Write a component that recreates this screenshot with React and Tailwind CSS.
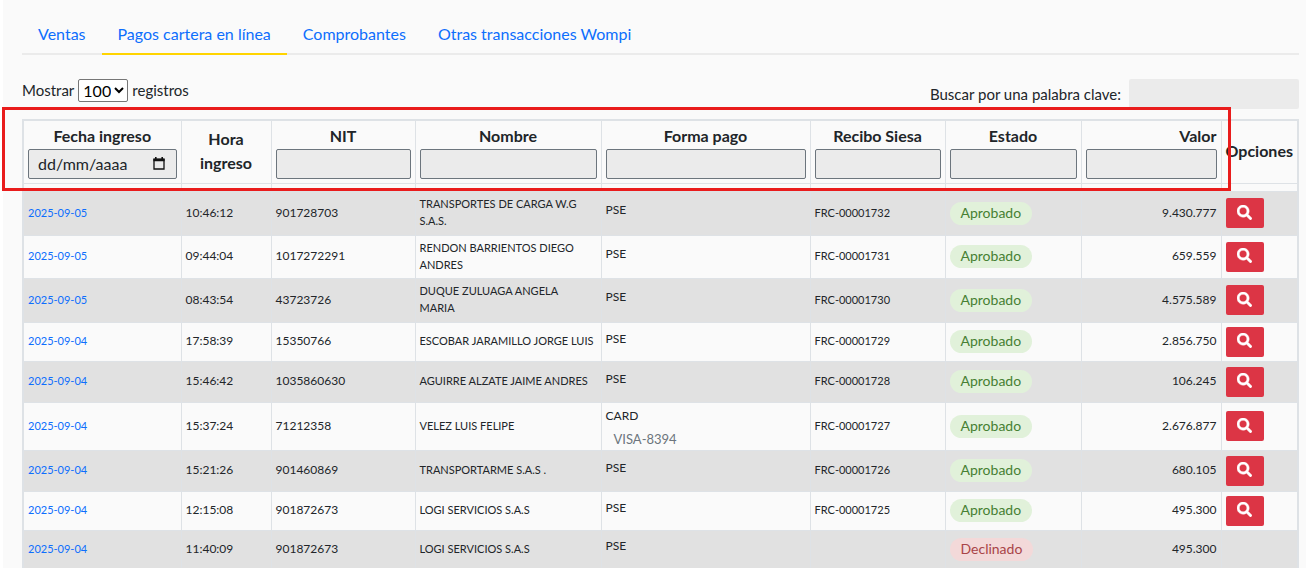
import React from "react";

const tabs = ["Ventas", "Pagos cartera en línea", "Comprobantes", "Otras transacciones Wompi"];

const rows = [
  { date: "2025-09-05", time: "10:46:12", nit: "901728703", name: "TRANSPORTES DE CARGA W.G S.A.S.", pay: "PSE", rc: "FRC-00001732", value: "9.430.777", h: "h-[44px]" },
  { date: "2025-09-05", time: "09:44:04", nit: "1017272291", name: "RENDON BARRIENTOS DIEGO ANDRES", pay: "PSE", rc: "FRC-00001731", value: "659.559", h: "h-[43px]" },
  { date: "2025-09-05", time: "08:43:54", nit: "43723726", name: "DUQUE ZULUAGA ANGELA MARIA", pay: "PSE", rc: "FRC-00001730", value: "4.575.589", h: "h-[44px]" },
  { date: "2025-09-04", time: "17:58:39", nit: "15350766", name: "ESCOBAR JARAMILLO JORGE LUIS", pay: "PSE", rc: "FRC-00001729", value: "2.856.750", h: "h-[39px]" },
  { date: "2025-09-04", time: "15:46:42", nit: "1035860630", name: "AGUIRRE ALZATE JAIME ANDRES", pay: "PSE", rc: "FRC-00001728", value: "106.245", h: "h-[41px]" },
  { date: "2025-09-04", time: "15:37:24", nit: "71212358", name: "VELEZ LUIS FELIPE", pay: "CARD", card: "VISA-8394", rc: "FRC-00001727", value: "2.676.877", h: "h-[48px]" },
  { date: "2025-09-04", time: "15:21:26", nit: "901460869", name: "TRANSPORTARME S.A.S .", pay: "PSE", rc: "FRC-00001726", value: "680.105", h: "h-[41px]" },
  { date: "2025-09-04", time: "12:15:08", nit: "901872673", name: "LOGI SERVICIOS S.A.S", pay: "PSE", rc: "FRC-00001725", value: "495.300", h: "h-[39px]" },
  { date: "2025-09-04", time: "11:40:09", nit: "901872673", name: "LOGI SERVICIOS S.A.S", pay: "PSE", rc: "", value: "495.300", declined: true, h: "h-[39px]" },
];

const columns = [
  { label: "Fecha ingreso", width: "w-[158px]", filter: "date" },
  { label: "Hora ingreso", width: "w-[90px]" },
  { label: "NIT", width: "w-[144px]", filter: "text" },
  { label: "Nombre", width: "w-[186px]", filter: "text" },
  { label: "Forma pago", width: "w-[209px]", filter: "text" },
  { label: "Recibo Siesa", width: "w-[135px]", filter: "text" },
  { label: "Estado", width: "w-[136px]", filter: "text" },
  { label: "Valor", width: "w-[140px]", filter: "text", right: true },
  { label: "Opciones", width: "w-[77px]" },
];

const border = "border border-[#dee2e6]";
const cell = `${border} px-1 pt-0 pb-0`;
const textCell = `${border} px-1 pt-0 pb-[2px]`;

function CalendarIcon() {
  return (
    <svg viewBox="0 0 12 13" className="h-[13px] w-3" fill="none" aria-hidden="true">
      <path d="M1 2.500h10v9.500H1z" stroke="#111" strokeWidth="1.300" />
      <path d="M.4 1.400h11.200v2.800H.4zM2 0h1.600v2H2zM8.400 0H10v2H8.400z" fill="#111" />
    </svg>
  );
}

function SearchIcon() {
  return (
    <svg viewBox="0 0 512 512" className="mb-[2px] size-[15px]" fill="currentColor" stroke="currentColor" strokeWidth="14" aria-hidden="true">
      <path d="M505 442.7L405.300 343c-4.500-4.500-10.600-7-17-7H372c27.600-35.300 44-79.700 44-128C416 93.100 322.900 0 208 0S0 93.100 0 208s93.100 208 208 208c48.300 0 92.700-16.400 128-44v16.300c0 6.400 2.500 12.500 7 17l99.700 99.700c9.400 9.400 24.600 9.400 33.900 0l28.300-28.300c9.400-9.400 9.400-24.600.1-34zM208 336c-70.700 0-128-57.200-128-128 0-70.700 57.200-128 128-128 70.700 0 128 57.200 128 128 0 70.700-57.200 128-128 128z" />
    </svg>
  );
}

function HeaderCell({ col }) {
  const id = "filtro-" + col.label.toLowerCase().replace(" ", "-");
  return (
    <th
      scope="col"
      className={`${col.filter ? cell : textCell} ${col.width} h-[63px] align-middle text-base leading-6 font-bold ${col.right ? "text-right" : "text-center"}`}
    >
      {col.filter ? <label htmlFor={id} className="mb-[2px] block leading-[22px]">{col.label}</label> : col.label}
      {col.filter === "text" && (
        <input id={id} type="text" className="block h-[30px] w-full rounded-xs border border-[#6c757d] bg-[#ebebeb] px-2 text-sm font-normal" />
      )}
      {col.filter === "date" && (
        <span className="flex h-[30px] w-full items-center rounded-xs border border-[#6c757d] bg-[#ebebeb] pr-[11px] pl-[9px]">
          <input id={id} type="text" placeholder="dd/mm/aaaa" className="w-full min-w-0 text-base font-normal placeholder:text-[#212529]" />
          <button type="button" aria-label="Abrir calendario"><CalendarIcon /></button>
        </span>
      )}
    </th>
  );
}

export default function App() {
  return (
    <div className="h-screen overflow-hidden bg-white pr-px pl-[3px]">
      <main className="min-h-full bg-[#fafafa] pt-[14px] pr-[7px] pl-[19px] font-['Lato',sans-serif] text-[#212529]">
        <nav className="flex h-[41px] border-b-2 border-[#ebebeb]">
          {tabs.map((t, i) => (
            <a
              key={t}
              href="#"
              className={`-mb-[2px] h-[41px] border-b-2 px-4 text-base leading-10 text-[#0d6efd] ${i === 1 ? "border-[#ffd400]" : "border-transparent"}`}
            >
              {t}
            </a>
          ))}
        </nav>

        <div className="mt-6 flex h-[30px] items-start justify-between text-[15px]">
          <label className="flex h-[22px] items-center gap-1">
            Mostrar
            <select className="h-[23px] rounded-xs border border-[#767676] bg-white text-base text-black" defaultValue="100">
              <option>10</option>
              <option>25</option>
              <option>50</option>
              <option>100</option>
            </select>
            registros
          </label>
          <label className="flex items-center gap-2">
            Buscar por una palabra clave:
            <input type="search" className="h-[30px] w-[170px] rounded-xs bg-[#ebebeb] px-2" />
          </label>
        </div>

        <div className="relative mt-[10px]">
          <table className="w-full table-fixed border-collapse border-2 border-[#dee2e6]">
            <thead>
              <tr>{columns.map((c) => <HeaderCell key={c.label} col={c} />)}</tr>
              <tr className="h-2">{columns.map((c) => <td key={c.label} className={cell} />)}</tr>
            </thead>
            <tbody className="text-xs leading-[17px]">
              {rows.map((r, i) => (
                <tr key={i} className={`${r.h} ${i % 2 === 0 ? "bg-[#e1e1e1]" : ""}`}>
                  <td className={`${textCell} text-[11px]`}><a href="#" className="text-[#0d6efd]">{r.date}</a></td>
                  <td className={textCell}>{r.time}</td>
                  <td className={textCell}>{r.nit}</td>
                  <td className={`${border} pt-0 pr-[6px] pb-[2px] pl-1 text-[11px]`}>{r.name}</td>
                  <td className={cell}>
                    {r.card ? (
                      <>
                        <div className="pt-1">{r.pay}</div>
                        <div className="mt-1 pl-2 text-[13px] leading-[22px] text-[#6c757d]">{r.card}</div>
                      </>
                    ) : (
                      <div className="pb-[7px]">{r.pay}</div>
                    )}
                  </td>
                  <td className={`${textCell} text-[11px]`}>{r.rc}</td>
                  <td className={cell}>
                    <span
                      className={`inline-block rounded-full px-[11px] pb-[1px] align-middle text-sm leading-[22px] ${r.declined ? "bg-[#f3d9d9] text-[#a94448]" : "bg-[#e1f1da] text-[#468033]"}`}
                    >
                      {r.declined ? "Declinado" : "Aprobado"}
                    </span>
                  </td>
                  <td className={`${textCell} text-right`}>{r.value}</td>
                  <td className={cell}>
                    {!r.declined && (
                      <button type="button" aria-label="Ver detalle" className="flex h-[30px] w-[38px] items-center justify-center rounded-xs bg-[#dc3545] text-white">
                        <SearchIcon />
                      </button>
                    )}
                  </td>
                </tr>
              ))}
            </tbody>
          </table>
          <div className="pointer-events-none absolute -top-3 right-[68px] -left-5 h-[84px] border-[3px] border-[#e91c1c]" />
        </div>
      </main>
    </div>
  );
}
